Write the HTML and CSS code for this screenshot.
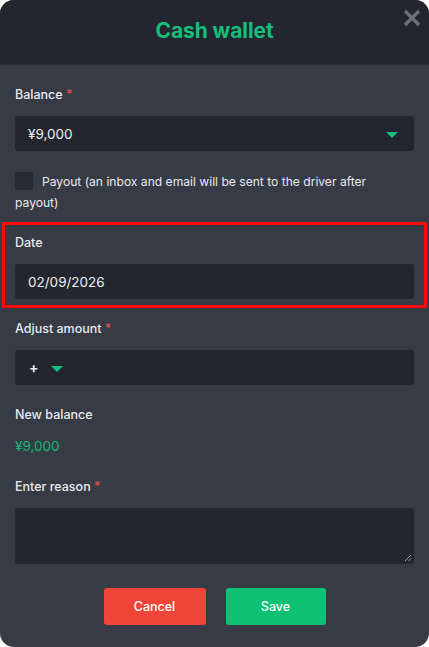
FILE: index.html
```html
<!DOCTYPE html>
<html lang="en">
<head>
<meta charset="utf-8">
<title>Cash wallet</title>
<link rel="stylesheet" href="styles.css">
</head>
<body>
<div class="modal">
  <header class="modal-header">
    <h1 class="title">Cash wallet</h1>
    <button class="close" aria-label="Close">
      <svg width="18" height="18" viewBox="0 0 18 18"><path d="M2 2L16 16M16 2L2 16" stroke="#6b7079" stroke-width="3.2" stroke-linecap="butt"/></svg>
    </button>
  </header>
  <div class="modal-body">
    <div class="group">
      <label class="label">Balance <span class="req">*</span></label>
      <div class="field select">
        <span>¥9,000</span>
        <span class="caret caret-right"></span>
      </div>
    </div>
    <div class="group check-row"><span class="checkbox"></span><span class="check-text">Payout (an inbox and email will be sent to the driver after payout)</span></div>
    <div class="group highlighted">
      <label class="label">Date</label>
      <div class="field"><span>02/09/2026</span></div>
    </div>
    <div class="group">
      <label class="label">Adjust amount <span class="req">*</span></label>
      <div class="field amount">
        <span class="plus">+</span>
        <span class="caret"></span>
      </div>
    </div>
    <div class="group">
      <label class="label">New balance</label>
      <div class="value">¥9,000</div>
    </div>
    <div class="group">
      <label class="label">Enter reason <span class="req">*</span></label>
      <div class="field textarea">
        <svg class="grip" width="8" height="8" viewBox="0 0 8 8"><path d="M7 1L1 7M7 4.5L4.5 7" stroke="#9ca3af" stroke-width="1"/></svg>
      </div>
    </div>
    <div class="actions">
      <button class="btn cancel">Cancel</button>
      <button class="btn save">Save</button>
    </div>
  </div>
</div>
</body>
</html>
```

FILE: styles.css
```css
* { box-sizing: border-box; }
html, body { margin: 0; padding: 0; background: #ffffff; }
body {
  font-family: Inter, "Noto Sans", "Liberation Sans", sans-serif;
  width: 429px;
  height: 647px;
}
.modal {
  width: 429px;
  height: 647px;
  background: #363b46;
  border-radius: 14px;
  overflow: hidden;
  display: flex;
  flex-direction: column;
}
.modal-header {
  height: 65px;
  background: #23262e;
  border-bottom: 1px solid #2c3038;
  position: relative;
  display: flex;
  align-items: center;
  justify-content: center;
}
.title {
  margin: 0;
  font-size: 21px;
  font-weight: 700;
  color: #13bf7b;
  letter-spacing: -0.1px;
  padding-bottom: 3px;
}
.close {
  position: absolute;
  top: 9px;
  right: 8px;
  background: none;
  border: 0;
  padding: 0;
  width: 18px;
  height: 18px;
  cursor: pointer;
}
.close svg { display: block; }
.modal-body {
  padding: 20px 15px 0 15px;
  display: flex;
  flex-direction: column;
}
.group {
  display: flex;
  flex-direction: column;
  margin-bottom: 20px;
  position: relative;
}
.label {
  font-size: 12.5px;
  line-height: 20px;
  color: #e7e9ee;
  font-weight: 500;
  margin-bottom: 11px;
}
.req { color: #e05252; }
.field {
  height: 35px;
  background: #23262e;
  border-radius: 3px;
  display: flex;
  align-items: center;
  padding: 0 13px;
  font-size: 13.5px;
  color: #eef0f3;
}
.select { justify-content: space-between; padding-right: 16px; }
.caret {
  width: 0;
  height: 0;
  border-left: 6px solid transparent;
  border-right: 6px solid transparent;
  border-top: 6px solid #14c07f;
  margin-top: 2px;
}
.amount { padding-left: 14px; gap: 13px; }
.plus { font-size: 14px; font-weight: 600; }
.check-row {
  display: block;
  font-size: 12.1px;
  line-height: 21px;
  color: #e7e9ee;
  font-weight: 400;
  padding-right: 24px;
}
.checkbox {
  display: inline-block;
  width: 18px;
  height: 18px;
  background: #262a33;
  border-radius: 2px;
  vertical-align: -4px;
  margin-right: 9px;
}
.highlighted::before {
  content: "";
  position: absolute;
  left: -13px;
  right: -13px;
  top: -11px;
  bottom: -9px;
  border: 3px solid #ff0a0a;
  pointer-events: none;
}
.value {
  font-size: 13.5px;
  line-height: 21px;
  color: #16b877;
}
.textarea {
  height: 56px;
  align-items: flex-end;
  justify-content: flex-end;
  padding: 0 2px 2px 0;
}
.grip { display: block; }
.actions {
  display: flex;
  justify-content: center;
  gap: 20px;
  margin-top: 4px;
}
.btn {
  height: 37px;
  border: 0;
  border-radius: 3px;
  font-family: inherit;
  font-size: 12.5px;
  font-weight: 500;
  color: #ffffff;
  cursor: pointer;
}
.cancel { width: 102px; background: #ef4538; }
.save { width: 100px; background: #0ec074; }
```
